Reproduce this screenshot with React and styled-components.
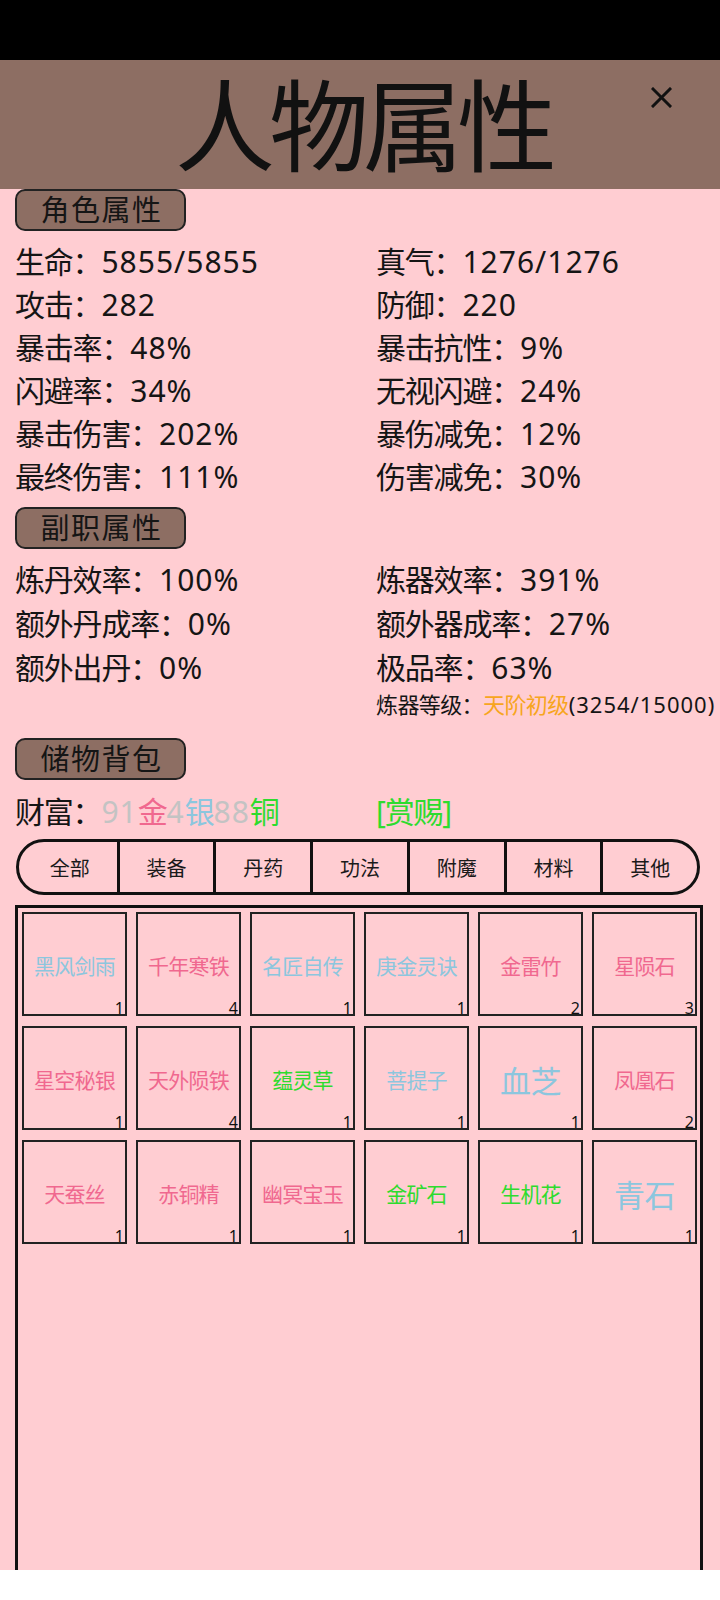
import React from 'react';
import styled, { createGlobalStyle } from 'styled-components';

const GlobalStyle = createGlobalStyle`
  html, body {
    margin: 0;
    padding: 0;
    background: #ffffff;
  }
  * {
    box-sizing: border-box;
  }
`;

const COLORS = {
  blue: "#8cc6de",
  pink: "#f0688f",
  green: "#2edb2e",
  silver: "#c3c3c3",
  orange: "#f7a520",
};

const FONT = `"Noto Sans", "Noto Sans CJK SC", sans-serif`;

const Page = styled.div({
  width: "720px",
  height: "1570px",
  display: "flex",
  flexDirection: "column",
  overflow: "hidden",
  fontFamily: FONT,
  color: "#151515",
});

const StatusBar = styled.div({
  height: "60px",
  background: "#000",
  flexShrink: 0,
});

const Header = styled.div({
  position: "relative",
  height: "129px",
  flexShrink: 0,
  background: "#8d6e63",
  display: "flex",
  alignItems: "center",
  justifyContent: "center",
});

const Title = styled.h1({
  margin: 0,
  paddingLeft: "6px",
  fontSize: "100px",
  fontWeight: 400,
  letterSpacing: "-6px",
  lineHeight: 1,
  color: "#111",
});

const Close = styled.button({
  position: "absolute",
  top: "27px",
  right: "48px",
  width: "21px",
  height: "21px",
  padding: 0,
  border: "none",
  background: "transparent",
  cursor: "pointer",
  display: "flex",
});

const Body = styled.div({
  flex: 1,
  background: "#ffcdd2",
  display: "flex",
  flexDirection: "column",
  padding: "0 17px 0 15px",
  minHeight: 0,
});

const Tag = styled.div(props => ({
  width: "171px",
  height: "42px",
  marginTop: props.top || "0px",
  border: "2px solid #222",
  borderRadius: "10px",
  background: "#8d6e63",
  fontSize: "29px",
  letterSpacing: "1.5px",
  lineHeight: "37px",
  textAlign: "center",
  paddingLeft: "2px",
  color: "#151515",
  flexShrink: 0,
}));

const StatGrid = styled.div(props => ({
  display: "grid",
  gridTemplateColumns: "361px 1fr",
  gridAutoRows: props.row || "43px",
  marginTop: props.top || "9px",
  fontSize: "30px",
  alignItems: "center",
  whiteSpace: "nowrap",
}));

const Stat = styled.div({
  lineHeight: 1,
});

const Key = styled.span({
  letterSpacing: "-1.2px",
});

const Value = styled.span(props => ({
  letterSpacing: "1px",
  color: props.color || "inherit",
}));

const SmallRow = styled.div({
  height: "28px",
  paddingLeft: "361px",
  fontSize: "22px",
  lineHeight: "28px",
  whiteSpace: "nowrap",
});

const SmallKey = styled.span(props => ({
  letterSpacing: "-0.6px",
  color: props.color || "inherit",
}));

const Coin = styled.span(props => ({
  color: props.color,
  letterSpacing: "-1.2px",
}));

const TabBar = styled.div({
  display: "flex",
  width: "684px",
  height: "56px",
  marginTop: "6px",
  marginLeft: "1px",
  border: "3px solid #111",
  borderRadius: "28px",
  overflow: "hidden",
  flexShrink: 0,
});

const Tab = styled.div(props => ({
  flex: 1,
  display: "flex",
  alignItems: "center",
  justifyContent: "center",
  fontSize: "20px",
  color: "#1a1a1a",
  borderLeft: props.first ? "none" : "3px solid #111",
  paddingLeft: props.first ? "4px" : "0",
}));

const Bag = styled.div({
  flex: 1,
  width: "688px",
  marginTop: "10px",
  border: "3px solid #111",
  borderBottom: "none",
  padding: "4px",
  display: "grid",
  gridTemplateColumns: "repeat(6, 105px)",
  gridAutoRows: "104px",
  columnGap: "9px",
  rowGap: "10px",
  alignContent: "start",
});

const Item = styled.div({
  position: "relative",
  border: "2px solid #222",
  display: "flex",
  alignItems: "center",
  justifyContent: "center",
});

const ItemName = styled.span(props => ({
  fontSize: props.big ? "31px" : "21px",
  letterSpacing: props.big ? "-0.5px" : "-0.8px",
  color: props.color,
  whiteSpace: "nowrap",
  marginTop: "2px",
}));

const Count = styled.span({
  position: "absolute",
  right: "1px",
  bottom: "-2px",
  fontSize: "16px",
  lineHeight: 1,
  color: "#111",
});

const mainStats = [
  ["生命", "5855/5855", "真气", "1276/1276"],
  ["攻击", "282", "防御", "220"],
  ["暴击率", "48%", "暴击抗性", "9%"],
  ["闪避率", "34%", "无视闪避", "24%"],
  ["暴击伤害", "202%", "暴伤减免", "12%"],
  ["最终伤害", "111%", "伤害减免", "30%"],
];

const jobStats = [
  ["炼丹效率", "100%", "炼器效率", "391%"],
  ["额外丹成率", "0%", "额外器成率", "27%"],
  ["额外出丹", "0%", "极品率", "63%"],
];

const tabs = ["全部", "装备", "丹药", "功法", "附魔", "材料", "其他"];

const items = [
  { name: "黑风剑雨", color: COLORS.blue, count: 1 },
  { name: "千年寒铁", color: COLORS.pink, count: 4 },
  { name: "名匠自传", color: COLORS.blue, count: 1 },
  { name: "庚金灵诀", color: COLORS.blue, count: 1 },
  { name: "金雷竹", color: COLORS.pink, count: 2 },
  { name: "星陨石", color: COLORS.pink, count: 3 },
  { name: "星空秘银", color: COLORS.pink, count: 1 },
  { name: "天外陨铁", color: COLORS.pink, count: 4 },
  { name: "蕴灵草", color: COLORS.green, count: 1 },
  { name: "菩提子", color: COLORS.blue, count: 1 },
  { name: "血芝", color: COLORS.blue, count: 1 },
  { name: "凤凰石", color: COLORS.pink, count: 2 },
  { name: "天蚕丝", color: COLORS.pink, count: 1 },
  { name: "赤铜精", color: COLORS.pink, count: 1 },
  { name: "幽冥宝玉", color: COLORS.pink, count: 1 },
  { name: "金矿石", color: COLORS.green, count: 1 },
  { name: "生机花", color: COLORS.green, count: 1 },
  { name: "青石", color: COLORS.blue, count: 1 },
];

function StatRows({ rows }) {
  return rows.flatMap(([k1, v1, k2, v2]) => [
    <Stat key={k1}><Key>{k1}：</Key><Value>{v1}</Value></Stat>,
    <Stat key={k2}><Key>{k2}：</Key><Value>{v2}</Value></Stat>,
  ]);
}

function App() {
  return (
    <>
      <GlobalStyle />
      <Page>
        <StatusBar />
        <Header>
          <Title>人物属性</Title>
          <Close aria-label="关闭">
            <svg width="21" height="21" viewBox="0 0 21 21">
              <path d="M2 2 L19 19 M19 2 L2 19" stroke="#111" strokeWidth="3" strokeLinecap="square" />
            </svg>
          </Close>
        </Header>
        <Body>
          <Tag>角色属性</Tag>
          <StatGrid>
            <StatRows rows={mainStats} />
          </StatGrid>

          <Tag top="9px">副职属性</Tag>
          <StatGrid row="44px" top="9px">
            <StatRows rows={jobStats} />
          </StatGrid>
          <SmallRow>
            <SmallKey>炼器等级：</SmallKey>
            <SmallKey color={COLORS.orange}>天阶初级</SmallKey>
            <Value>(3254/15000)</Value>
          </SmallRow>

          <Tag top="20px">储物背包</Tag>
          <StatGrid top="10px">
            <Stat>
              <Key>财富：</Key>
              <Value color={COLORS.silver}>91</Value>
              <Coin color={COLORS.pink}>金</Coin>
              <Value color={COLORS.silver}>4</Value>
              <Coin color={COLORS.blue}>银</Coin>
              <Value color={COLORS.silver}>88</Value>
              <Coin color={COLORS.green}>铜</Coin>
            </Stat>
            <Stat>
              <Coin color={COLORS.green}>[赏赐]</Coin>
            </Stat>
          </StatGrid>

          <TabBar>
            {tabs.map((t, i) => (
              <Tab key={t} first={i === 0}>{t}</Tab>
            ))}
          </TabBar>

          <Bag>
            {items.map(it => (
              <Item key={it.name}>
                <ItemName color={it.color} big={it.name.length === 2}>{it.name}</ItemName>
                <Count>{it.count}</Count>
              </Item>
            ))}
          </Bag>
        </Body>
      </Page>
    </>
  );
}

export default App;
